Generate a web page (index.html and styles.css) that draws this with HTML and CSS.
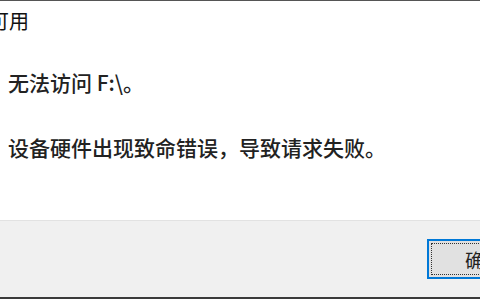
FILE: index.html
```html
<!DOCTYPE html>
<html lang="zh-CN">
<head>
    <meta charset="UTF-8">
    <meta name="viewport" content="width=device-width, initial-scale=1.0">
    <title>位置不可用</title>
    <link rel="stylesheet" href="styles.css">
</head>
<body>
    <div class="dialog">
        <div class="title">可用</div>
        <div class="content">
            <p class="msg">无法访问 F:\。</p>
            <p class="msg detail">设备硬件出现致命错误，导致请求失败。</p>
        </div>
        <div class="footer">
            <button class="btn">确定</button>
        </div>
    </div>
</body>
</html>
```

FILE: styles.css
```css
html, body {
    margin: 0;
    padding: 0;
    overflow: hidden;
    background-color: #ffffff;
}

body {
    font-family: "Noto Sans CJK SC", "Noto Sans", sans-serif;
    color: #222;
}

.dialog {
    width: 556px;
    border-top: 1px solid #555;
    border-bottom: 2px solid #3a3a3a;
}

.title {
    padding-top: 8px;
    height: 24px;
    line-height: 24px;
    font-size: 20px;
    color: #111;
    text-indent: -11px;
}

.content {
    padding: 37px 0 61px 8px;
}

.msg {
    margin: 0;
    font-size: 21px;
    line-height: 24px;
    font-weight: 500;
}

.detail {
    margin-top: 41px;
}

.footer {
    background-color: #f0f0f0;
    border-top: 1px solid #e2e2e2;
    box-sizing: border-box;
    height: 77px;
    padding: 18px 0 0 427px;
}

.btn {
    width: 114px;
    height: 40px;
    background-color: #e1e1e1;
    border: 2px solid #0078d7;
    outline: 1px dotted #333;
    outline-offset: -5px;
    font-family: inherit;
    font-size: 19px;
    color: #222;
    padding: 0;
}
```
